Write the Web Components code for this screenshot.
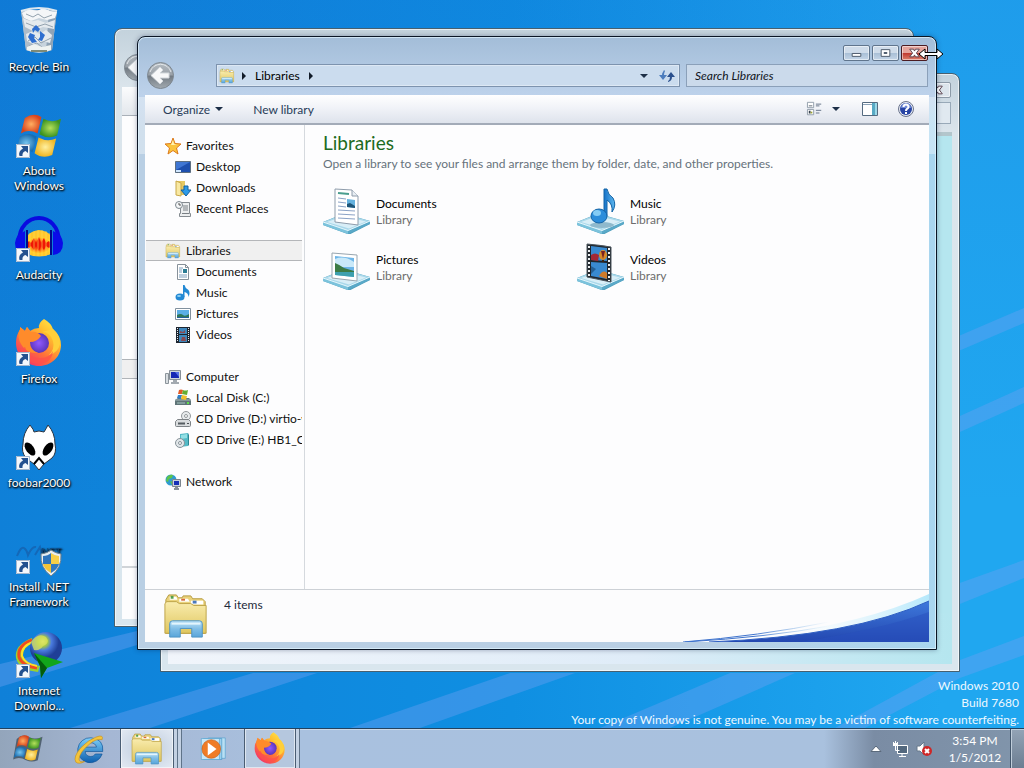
<!DOCTYPE html>
<html lang="en">
<head>
<meta charset="utf-8">
<title>Desktop</title>
<style>
html, body {
    height: 100%;
    margin: 0;
}
body {
    overflow: hidden;
    background: #1286dc;
    color: #000;
    font: 12px/15px Lato, "Open Sans", sans-serif;
}
</style>
</head>
<body>
<desktop-screen>
    <desktop-icon slot="icons" icon="bin">Recycle Bin</desktop-icon>
    <desktop-icon slot="icons" icon="flag" shortcut>About Windows</desktop-icon>
    <desktop-icon slot="icons" icon="audacity" shortcut>Audacity</desktop-icon>
    <desktop-icon slot="icons" icon="firefox" shortcut>Firefox</desktop-icon>
    <desktop-icon slot="icons" icon="foobar" shortcut>foobar2000</desktop-icon>
    <desktop-icon slot="icons" icon="dotnet" shortcut>Install .NET Framework</desktop-icon>
    <desktop-icon slot="icons" icon="idm" shortcut>Internet Downlo...</desktop-icon>

    <aero-window class="left" inactive>
        <blank-pane></blank-pane>
    </aero-window>
    <aero-window class="right" inactive>
        <blank-pane class="teal"></blank-pane>
    </aero-window>
    <aero-window class="main">
        <address-bar slot="address">Libraries</address-bar>
        <search-box slot="search" label="Search Libraries"></search-box>
        <command-bar></command-bar>
        <explorer-body>
            <nav-group slot="nav">
                <nav-item icon="star">Favorites</nav-item>
                <nav-item icon="monitor" child>Desktop</nav-item>
                <nav-item icon="downloads" child>Downloads</nav-item>
                <nav-item icon="recent" child>Recent Places</nav-item>
            </nav-group>
            <nav-group slot="nav">
                <nav-item icon="libraries" selected>Libraries</nav-item>
                <nav-item icon="document" child>Documents</nav-item>
                <nav-item icon="note" child>Music</nav-item>
                <nav-item icon="picture" child>Pictures</nav-item>
                <nav-item icon="film" child>Videos</nav-item>
            </nav-group>
            <nav-group slot="nav">
                <nav-item icon="computer">Computer</nav-item>
                <nav-item icon="disk" child>Local Disk (C:)</nav-item>
                <nav-item icon="cd" child>CD Drive (D:) virtio-win</nav-item>
                <nav-item icon="cdbox" child>CD Drive (E:) HB1_CCPA</nav-item>
            </nav-group>
            <nav-group slot="nav">
                <nav-item icon="network">Network</nav-item>
            </nav-group>
            <library-item icon="lib-documents">Documents</library-item>
            <library-item icon="lib-music">Music</library-item>
            <library-item icon="lib-pictures">Pictures</library-item>
            <library-item icon="lib-videos">Videos</library-item>
        </explorer-body>
        <details-pane>4 items</details-pane>
    </aero-window>

    <task-bar slot="taskbar">
        <task-button icon="start" size="34" label="Start"></task-button>
        <task-button icon="ie" size="30" label="Internet Explorer"></task-button>
        <task-button icon="folder" size="34" label="Windows Explorer" state="active" stack="2"></task-button>
        <task-button icon="player" size="28" label="Media Player"></task-button>
        <task-button icon="firefox" size="32" label="Firefox" state="open" stack="1"></task-button>
    </task-bar>
</desktop-screen>

<script>
// Base del zocalo de las bibliotecas
const STAND = `
<path d="M1 35 22 26.500 48 34v3L28.500 47h-3L1 38z" fill="#4f9fbd"/>
<path d="M1 35 22 27l26 7-21 10z" fill="#a9d8ea"/>
<path d="M5 35 22 29l22 5.500-17 7z" fill="#d8eef7"/>
<path d="M1 35v3l25 9v-3.500z" fill="#7cc3dc"/><path d="M26 43.500V47l22-10v-3z" fill="#5aa9c8"/>
<path d="M1 35l25 8.500L48 34" fill="none" stroke="#e9f8fd"/>`

const FOLDER = `
<defs><linearGradient id="fo" x2="0" y2="1"><stop stop-color="#f9ecae"/><stop offset="1" stop-color="#dfc65e"/></linearGradient>
<linearGradient id="fb" x2="0" y2="1"><stop stop-color="#bfe4f7"/><stop offset=".5" stop-color="#7fbde6"/><stop offset="1" stop-color="#59a5da"/></linearGradient></defs>
<path d="M4 7 7 2h8l2 3h4l1-2h8l2 3h10l3 3v33H4z" fill="#ead27a" stroke="#b49a3f"/>
<path d="M8 4h7l1 3H8z" fill="#fff"/><path d="M9 3h3v3H9z" fill="#54a14c"/>
<path d="M18 6h9l2 3H18z" fill="#fff"/><path d="M20 6h4v2h-4z" fill="#d66a3a"/>
<path d="M30 8h13v4H30z" fill="#fff"/><path d="M32 8h4v3h-4z" fill="#4a78bd"/>
<path d="M3 11 5 9h10l3 2h12l3 2h13v29H3z" fill="url(#fo)" stroke="#bda348"/>
<path d="M8 46V32q0-3 3-3h28q3 0 3 3v14H31v-9H19v9z" fill="url(#fb)" stroke="#4d93c4"/>
<path d="M10 32h30" stroke="#e3f5fd" stroke-width="2"/>`

const FLAG = `
<defs><radialGradient id="fr"><stop stop-color="#ffae62"/><stop offset="1" stop-color="#d8431c"/></radialGradient>
<radialGradient id="fg"><stop stop-color="#b4e05a"/><stop offset="1" stop-color="#3d9422"/></radialGradient>
<radialGradient id="fl"><stop stop-color="#77c4ee"/><stop offset="1" stop-color="#1a6db0"/></radialGradient>
<radialGradient id="fy"><stop stop-color="#fff0a0"/><stop offset="1" stop-color="#f0b624"/></radialGradient></defs>
<path d="M9 5q9-6 17-1l-4 17q-9-5-17 0z" fill="url(#fr)"/>
<path d="M28 6q9 5 18 0l-4 17q-9 4-18-1z" fill="url(#fg)"/>
<path d="M4 24q9-5 17 0l-4 16q-8-5-17 0z" fill="url(#fl)"/>
<path d="M23 25q9 5 18 1l-4 17q-10 4-18-2z" fill="url(#fy)"/>`

const ICONS = {
    bin: ['0 0 48 48', `
<path d="M6 2 11 42q13 5 26 0L42 2z" fill="#c7d3dd"/>
<path d="M6 2 11 42q5 2 9 2L16 2z" fill="#aebcc9"/><path d="M34 2l-3 42 6-2L42 2z" fill="#8fa3b6"/>
<path d="M7 5 14 1l8 2 6-3 7 3 7 1-2 6-8 2-8-2-8 3-7-3z" fill="#f4f6f8"/>
<path d="M8 10q8 5 15 2l8 3 9-3-1 9-11-2-10 4-8-4zM11 26l7-3 7 3 6-4 6 5-2 8-8-2-7 4-8-4z" fill="#e5eaee"/>
<path d="M11 6l7 3 5-3 6 4 8-3M11 15l10 4 9-3 8 3M13 33l7-4 6 6 10-5M14 38l8-3 6 5 8-4" stroke="#93a2ae" fill="none"/>
<path d="M12 39l7-3 8 3 9-2v5q-12 5-24 0z" fill="#f0f3f1"/><path d="M16 43h16" stroke="#7d8a78" stroke-width="2"/>
<path d="M17 21l4-4 4 4-2 3-3-2-2 3zM25 23l5 4-3 6-4-1 2-3zM15 25l5 2-1 3 3 4-5 1-4-6z" fill="#2f6fd0"/>
<path d="M6 3q18-6 36 0" stroke="#dce7ef" stroke-width="2" fill="none"/>`],
    flag: ['-1 -1 49 49', FLAG],
    start: ['-3 -4 58 58', `<path d="M5 8Q15-2 27 5q9 5 22-1L41 44q-10 5-20 0-12-7-22-1z" fill="#22303c" opacity=".6"/>` + FLAG],
    audacity: ['0 0 48 48', `
<defs><radialGradient id="aw"><stop stop-color="#f00"/><stop offset=".45" stop-color="#ff4b10"/><stop offset="1" stop-color="#ffd02a"/></radialGradient></defs>
<path d="M4 26C4-6 44-6 44 26" fill="none" stroke="#0a0ae0" stroke-width="4"/>
<path d="M12 20q4-5 12-6 9 1 12 6v18q-12 5-24 0z" fill="#ffc72c"/>
<path d="M12 24q12-6 24 0v11q-12 5-24 0z" fill="url(#aw)"/>
<path d="M11 28l3-3 2 2 3-5 2 5 3-6 2 6 3-5 2 5 3-2 3 4-3 3-3-2-2 4-3-4-2 5-3-5-2 4-3-4-2 2z" fill="#f01505"/>
<path d="M15 17v21M19 15v25M23 14v26M27 14v26M31 15v25M35 17v21" stroke="#ffdf55" opacity=".6"/>
<path d="M10 15v24Q0 38 0 27 1 18 10 15zM38 15v24q10-1 10-12-1-9-10-12z" fill="#0b0be8"/>
<path d="M12 14v25M36 14v25" stroke="#000a8c" stroke-width="2"/>`],
    firefox: ['0 2 48 48', `
<defs><linearGradient id="fx" x1="1" x2=".2" y2="1"><stop stop-color="#fff44f"/><stop offset=".35" stop-color="#ffbd2e"/><stop offset=".65" stop-color="#ff7139"/><stop offset="1" stop-color="#f02c6f"/></linearGradient>
<radialGradient id="fp"><stop stop-color="#9059ff"/><stop offset="1" stop-color="#5a35b9"/></radialGradient></defs>
<path d="M29 1q7 4 9 10 8 7 8 16c0 12-10 21-22 21S1 38 1 25q0-8 4-13V9l5 4 2-4 3 4q4-3 9-3-1-5 5-9z" fill="url(#fx)"/>
<circle cx="24" cy="25" r="10" fill="url(#fp)"/>
<path d="M4 13q2-3 1-4l5 4 2-4 4 5q6-1 10 4-4 6-11 6 0 8 8 11-12 1-17-9-4-7-2-13z" fill="#ff8b2b"/>
<path d="M27 14q8 0 11 9 2 8-4 14 9-2 11-11 0-9-7-15z" fill="#ffcf3a"/>
<path d="M10 29q4 12 16 11 8 0 12-7-1 12-14 13Q9 45 5 31z" fill="#ff4f4c" opacity=".7"/>`],
    foobar: ['0 2 48 48', `
<path d="M15 3q4 5 4 7 5-2 10 0 2-3 4-7 7 8 7 19 2 9-3 14l-8 6-5 6-5-6-8-6q-5-6-3-14 0-11 7-19z" fill="#fff" stroke="#2b3440"/>
<ellipse cx="15" cy="27" rx="4" ry="7.500" transform="rotate(-35 15 27)"/><ellipse cx="33" cy="27" rx="4" ry="7.500" transform="rotate(35 33 27)"/>
<path d="M19 42l5-6 5 6" fill="none" stroke="#000" stroke-width="2"/>`],
    dotnet: ['0 0 48 48', `
<path d="M2 28q4-10 7-8 3 2 4 7 4-9 8-8M20 27l5-8 2 8" stroke="#1468b8" stroke-width="2" fill="none"/>
<text x="26" y="28" font-family="Open Sans" font-size="11" fill="#124c86">NET</text>
<path d="M26 26q7-1 10-4 4 3 10 4 1 14-10 22-11-8-10-22z" fill="#e7edf2" stroke="#71838f"/>
<path d="M28 28q5 0 8-3v11h-8z" fill="#2d74bd"/><path d="M36 25q4 3 8 3v8h-8z" fill="#f7cf48"/>
<path d="M28 36h8v9q-7-4-8-9z" fill="#f3c437"/><path d="M36 36h8q-1 5-8 9z" fill="#3179c2"/>`],
    idm: ['0 0 48 48', `
<defs><radialGradient id="ig" cx=".4" cy=".3"><stop stop-color="#fafc8a"/><stop offset=".3" stop-color="#a3c745"/><stop offset=".55" stop-color="#4a7ce0"/><stop offset="1" stop-color="#1f3f97"/></radialGradient></defs>
<path d="M17 6Q-1 13 1 26q3 12 22 14l2-6Q9 33 8 23q0-8 10-12z" fill="#9bd030"/>
<path d="M17 8Q2 14 4 25q3 9 18 11" fill="none" stroke="#f04a20" stroke-width="3"/><path d="M18 10Q6 14 7 24q3 8 15 10" fill="none" stroke="#ffdf28" stroke-width="2"/>
<circle cx="31" cy="16" r="16" fill="url(#ig)"/>
<path d="M16 10q7-10 15-5 5 6-3 9-3 5-9 4z" fill="#d6e05a" opacity=".8"/>
<path d="M19 21q13 4 29 9L32 36 26 46 25 34z" fill="#12a51b"/><path d="M19 21l13 15-6 10-1-12z" fill="#045c0b"/>`],
    shortcut: ['0 0 14 14', `
<path d="M0 0h14v14H0z" fill="#f3f7fc"/><path d="M.5.5h13v13H.5z" fill="none" stroke="#a5b7cd"/>
<path d="M5 2h7v7L9.500 7Q6 8 6.500 12H3.500Q2 7 7 4.500z" fill="#24518f"/>`],
    folder: ['0 0 50 48', FOLDER],
    libraries: ['0 0 50 48', FOLDER],
    star: ['0 0 16 16', `<path d="M8 0l2 5.500 6 .5-4.500 4 1.500 6-5-3.500L3 16l1.500-6L0 6l6-.5z" fill="#fbc43c" stroke="#dc7a1b"/><path d="M8 2l1 4 3 1H6z" fill="#fff2b0"/>`],
    monitor: ['0 0 16 16', `<path d="M.5 2.500h15v11H.5z" fill="#1d4fae" stroke="#5c6e80"/><path d="M1 3h14L1 11z" fill="#3f76d3"/><path d="M1 12h5" stroke="#cfe6ff" stroke-width="2"/>`],
    downloads: ['0 0 16 16', `<path d="M1 1h9v14H1z" fill="#e5c964"/><path d="M1 1l5 2v13l-5-1z" fill="#f8e8a2" stroke="#c8a849"/><path d="M9 6h4v4h3l-5 6-5-6h3z" fill="#2d9be8" stroke="#12609f"/>`],
    recent: ['0 0 16 16', `<path d="M5.500 1.500h9v11h1v3H4.500v-3h1z" fill="#eceeef" stroke="#858b90"/><path d="M8 5h5M8 7h5M8 9h5M7 12.500h7" stroke="#7a8085"/><circle cx="4" cy="4" r="3.500" fill="#f5f7f8" stroke="#7d878f"/><path d="M4 2v2h2" stroke="#555" fill="none"/>`],
    document: ['0 0 16 16', `<path d="M2.500.5h8l3 3v12h-11z" fill="#fff" stroke="#87919a"/><path d="M10.500.5v3h3" fill="none" stroke="#87919a"/><path d="M4 4h4M4 6h3M4 8h3M4 11h8M4 13h8" stroke="#7f9fbd"/><path d="M8 5h4v4H8z" fill="#2c7c94"/>`],
    note: ['0 0 16 16', `<ellipse cx="5" cy="12" rx="4.500" ry="3.500" fill="#2389d4"/><path d="M8 0h1.500q.5 3 4 5 2 3 0 7 0-4-4-5v5H8z" fill="#2389d4"/><ellipse cx="4" cy="11" rx="2" ry="1" fill="#8ed0f5"/>`],
    picture: ['0 0 16 16', `<path d="M.5 2.500h15v11H.5z" fill="#fff" stroke="#82919e"/><path d="M2 4h12v8H2z" fill="#5aaee6"/><path d="M2 9q4-2 6 0t6-1v4H2z" fill="#2f7659"/><path d="M2 11h12v1H2z" fill="#215f9c"/>`],
    film: ['0 0 16 16', `<path d="M1 0h14v16H1z" fill="#1d2530"/><path d="M4 1h8v6H4zM4 8h8v7H4z" fill="#3f87bd"/><path d="M5 4l3 1 2-2v3H5zM7 10h3l1 4H6z" fill="#8a4a52"/><path d="M2.500 1v14M13.500 1v14" stroke="#e9eef2" stroke-dasharray="1 1"/>`],
    computer: ['0 0 16 16', `<path d="M.5 4.500h3v10h-3z" fill="#d8dde1" stroke="#8b949b"/><path d="M4.500 1.500h11v9h-11z" fill="#cdd6dd" stroke="#868f98"/><path d="M6 3h8v6H6z" fill="#1527b4"/><path d="M10 3h4v5z" fill="#5470e6"/><path d="M8 11h4v2h2v2H6v-2h2z" fill="#a3aab1"/>`],
    disk: ['0 0 16 16', `<path d="M0 10l3-2h11l2 2v5H0z" fill="#5f7478"/><path d="M0 10h16" stroke="#aab9bb"/><path d="M2 13h8" stroke="#a8c6c0"/><path d="M12 12h2v2h-2z" fill="#5ee04a"/><path d="M4 0q2-1 4 0L7 4 3 4z" fill="#e35a25"/><path d="M8 0q2 1 5 0l-1 5-5-1z" fill="#64ad31"/><path d="M3 5l4 0-1 4-4-1z" fill="#327fc4"/><path d="M7 5l5 1-1 4-5-1z" fill="#f2c02b"/>`],
    cd: ['0 0 16 16', `<circle cx="11" cy="5" r="4.500" fill="#e8ebed" stroke="#94999d"/><circle cx="11" cy="5" r="1.500" fill="#fff" stroke="#94999d"/><path d="M.5 10.500l2-2h11l2 2v4q0 1-1 1h-13q-1 0-1-1z" fill="#d9dcde" stroke="#7e8387"/><path d="M3 12.500h7" stroke="#555c61" stroke-width="2"/><path d="M12 12h2v1h-2z" fill="#4a4f53"/>`],
    cdbox: ['0 0 16 16', `<path d="M5 2l8-1v13l-8 1z" fill="#53b9c5"/><path d="M6 3l6-1v4L6 7z" fill="#92dfe4"/><path d="M13 1l1 2v10l-1 1z" fill="#2c8792"/><circle cx="5" cy="11" r="4.500" fill="#e1e6e9" stroke="#879299"/><circle cx="5" cy="11" r="1.500" fill="#fff" stroke="#879299"/>`],
    network: ['0 0 16 16', `<circle cx="6" cy="6" r="5.500" fill="#2e9bd1"/><path d="M2 3q3-3 6-2l-1 3-3 1-1 3-2-1zM5 7l3 1-1 3z" fill="#5fc44a"/><path d="M7.500 5.500h8v7h-8z" fill="#c9d2da" stroke="#7b858e"/><path d="M9 7h5v4H9z" fill="#1630b8"/><path d="M10 13h3v1h1v2H9v-2h1z" fill="#88919a"/>`],
    'lib-documents': ['1 0 48 48', STAND + `
<path d="M13 2l17 1 6 6v29L13 35z" fill="#fff" stroke="#8e9cab"/><path d="M30 3v6h6" fill="#e8eef4" stroke="#8e9cab"/>
<path d="M16 6l11 1" stroke="#4b9e8f" stroke-width="2"/><path d="M16 11l8 1M16 15l8 1M16 19l8 1M16 23l17 1M16 27l17 1M16 31l17 1" stroke="#8aa2c6"/>
<path d="M25 12l8 1v8l-8-1z" fill="#64b2df"/><path d="M25 17l3-1 5 3v2l-8-1z" fill="#1d5578"/>`],
    'lib-music': ['1 0 48 48', STAND + `
<defs><linearGradient id="mn"><stop stop-color="#1672c8"/><stop offset="1" stop-color="#5db7ee"/></linearGradient></defs>
<ellipse cx="26" cy="38" rx="12" ry="3" fill="#8fb9cc"/>
<path d="M28 2h3q1 6 6 9 4 7-1 14 1-8-5-12v16h-3z" fill="url(#mn)" stroke="#1464a6"/>
<ellipse cx="23" cy="29" rx="8" ry="7" fill="#2b8ddb" stroke="#1464a6"/><ellipse cx="21" cy="26" rx="4" ry="3" fill="#84ccf5"/>`],
    'lib-pictures': ['1 0 48 48', STAND + `
<path d="M10 10l25 2v26l-25-3z" fill="#fff" stroke="#98a5af"/>
<path d="M13 13l19 2v19l-19-2z" fill="#6db5e8"/><path d="M13 16q9-4 19 3v5H13z" fill="#c9e9f9"/>
<path d="M13 20q5 2 9 5l10 3v2l-19 0z" fill="#3c7b45"/><path d="M13 29l19 0v5l-19-2z" fill="#3da0ae"/>`],
    'lib-videos': ['1 0 48 48', STAND + `
<path d="M11 1q12 1 24 3v35l-24-5z" fill="#20262c" stroke="#4a545c"/>
<path d="M15 3l16 2v13l-16-1zM15 19l16 1v16l-16-3z" fill="#398ad0"/>
<path d="M15 12q4-3 8 0l-1 6-7-1z" fill="#a42833"/><ellipse cx="27" cy="12" rx="4" ry="5" fill="#d78a27"/><path d="M25 8l2 8 2-8z" fill="#7a2222"/><path d="M26 17h2v2h-2z" fill="#3d2613"/>
<path d="M23 33q4-7 8-3v6z" fill="#cf7b2b"/><path d="M15 23l5 3-5 5z" fill="#235f94"/>
<path d="M13 3v31M33 5v33" stroke="#eef1f3" stroke-width="2" stroke-dasharray="2 2"/>`],
    ie: ['0 0 48 48', `
<defs><linearGradient id="ie" x2="0" y2="1"><stop stop-color="#7fd0fa"/><stop offset="1" stop-color="#0c5eae"/></linearGradient></defs>
<path d="M27 6a20 20 0 1 0 18 26H34q-3 5-8 4-8-1-8-8h28Q48 8 27 6zm-9 15q1-7 9-7 7 0 9 7z" fill="url(#ie)" stroke="#0a4f93"/>
<path d="M45 9Q48 0 35 5 22 10 11 22-2 37 3 45q5 4 14-1Q8 46 8 40q1-11 17-24 10-9 20-7z" fill="#f4c43c" stroke="#c58f1b"/>`],
    player: ['0 0 48 48', `
<path d="M16 5h29v35H16z" fill="#b9e0f4" stroke="#4a9ac9"/><path d="M8 6h31v36H8z" fill="#9bd0ee" stroke="#3d8dbf"/>
<path d="M4 6h31v36H4z" fill="#c6e7f8" stroke="#4e9fcd"/><circle cx="21" cy="24" r="16" fill="#ef7c26" stroke="#c55b14"/>
<path d="M15 13l15 11-15 11z" fill="#fff"/>`],
    back: ['0 0 27 27', `
<defs><linearGradient id="bk" x2="0" y2="1"><stop stop-color="#b5bcc2"/><stop offset=".48" stop-color="#9aa1a8"/><stop offset=".52" stop-color="#727a82"/><stop offset="1" stop-color="#a3abb1"/></linearGradient></defs>
<circle cx="13.500" cy="13.500" r="13" fill="url(#bk)" stroke="#7d8790"/><path d="M3 10a11 11 0 0 1 21 0" fill="none" stroke="#e3e7ea"/>
<path d="M13 5l3 3-3 3h9v5h-9l3 3-3 3-9-8.500z" fill="#f7f8f9" stroke="#d3d8dc"/>`],
    minimize: ['0 0 26 14', `<path d="M8.500 7.500h9v3h-9z" fill="#fff" stroke="#4c596a"/>`],
    maximize: ['0 0 26 14', `<path d="M8.500 3.500h9v7h-9z" fill="#fff" stroke="#4c596a"/><path d="M11.500 6.500h3v1h-3z" fill="#9fb3ca" stroke="#4c596a"/>`],
    close: ['0 0 26 14', `<path d="M8 3h4l1 2 1-2h4l-3 4 3 4h-4l-1-2-1 2H8l3-4z" fill="#fff" stroke="#5c4550"/>`],
    right: ['0 0 8 8', `<path d="M2 0l4 4-4 4z" fill="#111b28"/>`],
    down: ['0 0 8 8', `<path d="M0 2h8L4 6z" fill="#1d2f47"/>`],
    refresh: ['0 0 16 16', `<path d="M5 2L4 4q-1 1-1 3H0l4 5 4-5H5q0-2 1-4z" fill="#4d7dbd"/><path d="M12 4l4 5h-3q0 4-4 5l0-1q2-1 2-4H8z" fill="#294f8d"/>`],
    view: ['0 0 18 16', `<path d="M.5.500h7v6h-7zM.5 8.500h7v6h-7z" fill="#fff" stroke="#8b97a5"/><path d="M2 4h4v1H2zM2 10h2v3H2z" fill="#36424f"/><path d="M4 11h2v2H4z" fill="#9ba232"/><path d="M10 2.500h6M10 4.500h4M10 9.500h6M10 12.500h4" stroke="#5a6a7f"/>`],
    preview: ['0 0 16 14', `<path d="M.5.500h15v13H.5z" fill="#fff" stroke="#546a80"/><path d="M1 2.500h14" stroke="#8ba2b8"/><path d="M10 1h5v12h-5z" fill="#58a9c4"/><path d="M13 1h2v12h-2z" fill="#9bd8e8"/>`],
    help: ['0 0 16 16', `<circle cx="8" cy="8" r="7.500" fill="#e7ebf4" stroke="#69738c"/><circle cx="8" cy="8" r="6" fill="#2744a4"/><path d="M3 7a5 5 0 0 1 10 0z" fill="#6d87d4"/><path d="M5.500 6q0-2.500 2.500-2.500T10.500 6q0 1-1.500 2-1 .5-1 2" fill="none" stroke="#fff" stroke-width="2"/><path d="M7 11h2v2H7z" fill="#fff"/>`],
    up: ['0 0 10 6', `<path d="M0 5.500L5 0l5 5.500z" fill="#fff" stroke="#5b6a7c"/>`],
    lan: ['0 0 16 16', `<path d="M5.500 4.500h10v8h-10z" fill="#53687e" stroke="#fff"/><path d="M10 13v2M7 15.500h7" stroke="#fff"/><path d="M1.500 1v3h4V1M3.500 0v9.500h4" stroke="#fff" fill="none"/><path d="M1 2h5v3H1z" fill="#fff"/>`],
    muted: ['0 0 16 16', `<path d="M1 5h3l4-4v13l-4-4H1z" fill="#fff" stroke="#66788b"/><circle cx="11" cy="10" r="5" fill="#cf2727"/><path d="M9 8l4 4M13 8l-4 4" stroke="#fff" stroke-width="2"/>`],
    resize: ['0 0 24 12', `<path d="M0 6l6-5v3.500h12V1l6 5-6 5V7.500H6V11z" fill="#fff" stroke="#000"/>`],
}

class WinIcon extends HTMLElement {
    constructor(){
        super()
        this.attachShadow({mode: 'open'})
        const [box, shapes] = ICONS[this.getAttribute('name')]
        this.shadowRoot.innerHTML = `
        <style>
        :host{ display: block; flex: none; width: 16px; height: 16px; }
        svg{ display: block; width: 100%; height: 100%; overflow: visible; }
        </style>
        <svg viewBox="${box}" aria-hidden="true">${shapes}</svg>`
    }
}

class DesktopIcon extends HTMLElement {
    constructor(){
        super()
        this.attachShadow({mode: 'open'})
        const arrow = this.hasAttribute('shortcut') ? '<win-icon class="arrow" name="shortcut"></win-icon>' : ''
        this.shadowRoot.innerHTML = `
        <style>
        :host{ display: block; height: 104px; }
        a{
            display: flex;
            flex-direction: column;
            align-items: center;
            gap: 3px;
            color: #fff;
            text-align: center;
            text-decoration: none;
            text-shadow: 1px 1px 2px #000, 0 1px 2px #000;
        }
        .art{ position: relative; }
        .art > win-icon:first-child{ width: 48px; height: 48px; }
        .arrow{ position: absolute; left: 1px; bottom: 2px; width: 14px; height: 14px; }
        </style>
        <a href="#">
            <div class="art"><win-icon name="${this.getAttribute('icon')}"></win-icon>${arrow}</div>
            <span><slot></slot></span>
        </a>`
    }
}

class DesktopScreen extends HTMLElement {
    constructor(){
        super()
        this.attachShadow({mode: 'open'})
        this.shadowRoot.innerHTML = `
        <style>
        :host{ display: grid; grid-template-rows: 1fr 40px; height: 100vh; }
        main{
            position: relative;
            overflow: hidden;
            background:
                linear-gradient(180deg, rgba(20,80,200,.12), transparent 70%),
                linear-gradient(90deg, #0f80d8, #0f8fe2 50%, #20a7f0 92%);
        }
        .rays{ position: absolute; inset: 0; width: 100%; height: 100%; }
        .icons{ position: relative; display: flex; flex-direction: column; width: 78px; padding-top: 8px; }
        ::slotted(aero-window){ position: absolute; }
        ::slotted(.left){ inset: 28px 110px 101px 114px; }
        ::slotted(.right){ inset: 73px 64px 56px 160px; }
        ::slotted(.main){ inset: 36px 87px 78px 137px; }
        .build{
            position: absolute;
            right: 5px;
            bottom: 0;
            color: #eef8ff;
            text-align: right;
            line-height: 17px;
        }
        .build p{ margin: 0; }
        .cursor{ position: absolute; top: 48px; right: 81px; width: 24px; height: 12px; }
        </style>
        <main>
            <svg class="rays" viewBox="0 0 1024 728" preserveAspectRatio="none" aria-hidden="true" fill="#6f9ff2" fill-opacity=".4">
                <path d="M0 664 137 631V645L0 687z"/>
                <path d="M70 728 253 673H317L150 728z"/>
                <path d="M350 728 510 673H575L420 728z"/>
                <path d="M600 728 730 673H795L670 728z"/>
                <path d="M835 728 960 660 1024 636V655L960 678 865 728z"/>
                <path d="M940 590 1024 560V578L940 612z"/>
                <path d="M940 425 1024 387V403L940 441z"/>
                <path d="M940 344 1024 308V323L940 359z"/>
            </svg>
            <div class="icons"><slot name="icons"></slot></div>
            <div class="build">
                <p>Windows 2010</p>
                <p>Build 7680</p>
                <p>Your copy of Windows is not genuine. You may be a victim of software counterfeiting.</p>
            </div>
            <slot></slot>
            <win-icon class="cursor" name="resize"></win-icon>
        </main>
        <slot name="taskbar"></slot>`
    }
}

class AeroWindow extends HTMLElement {
    constructor(){
        super()
        this.attachShadow({mode: 'open'})
        this.shadowRoot.innerHTML = `
        <style>
        :host{
            display: flex;
            flex-direction: column;
            box-sizing: border-box;
            padding: 0 7px 7px;
            border: 1px solid #0a1524;
            border-radius: 8px 8px 0 0;
            background:
                linear-gradient(rgba(255,255,255,.35), rgba(255,255,255,.35)) 0 60px / 100% 57px no-repeat,
                linear-gradient(#a3bdd8, #bdd2eb 58px, transparent 90px),
                linear-gradient(90deg, #b9cfe4 70%, #a9d6ef);
            box-shadow: inset 0 0 0 1px rgba(225,245,255,.7), 0 0 5px rgba(0,20,60,.35);
        }
        :host([inactive]){
            border-color: #48606f;
            background: linear-gradient(#c3d2dc, #dbe5ec 60px, #d9e6ee);
            box-shadow: inset 0 0 0 1px rgba(255,255,255,.6);
        }
        .caption{ display: flex; justify-content: flex-end; gap: 2px; padding: 8px 1px 1px; }
        .caption button{
            width: 27px;
            height: 16px;
            padding: 0;
            border: 1px solid #60758d;
            border-radius: 2px;
            background: linear-gradient(#cfdcea 48%, #a9bfd6 52%, #c5d6e8);
            box-shadow: inset 0 0 0 1px rgba(255,255,255,.5);
        }
        .caption win-icon{ width: 25px; height: 14px; }
        .caption .close{ border-color: #4b1c22; background: linear-gradient(#e5a49c 48%, #c13a30 52%, #dd7f6c); }
        :host([inactive]) .caption button{ border-color: #8c9aa7; background: #dce5ec; }
        .bar{ display: flex; align-items: center; gap: 6px; padding: 0 1px 6px 2px; }
        .back{ margin-right: 36px; padding: 0; border: 0; background: none; }
        .back win-icon{ width: 27px; height: 27px; }
        .address{ flex: 464; }
        .search{ flex: 242; }
        :host([inactive]) .address, :host([inactive]) .search{ height: 20px; border: 1px solid #98a9b8; background: #e0e9f0; }
        .client{ flex: 1; display: flex; flex-direction: column; min-height: 0; background: #fdfdfe; }
        </style>
        <div class="caption">
            <button aria-label="Minimize"><win-icon name="minimize"></win-icon></button>
            <button aria-label="Maximize"><win-icon name="maximize"></win-icon></button>
            <button class="close" aria-label="Close"><win-icon name="close"></win-icon></button>
        </div>
        <div class="bar">
            <button class="back" aria-label="Back"><win-icon name="back"></win-icon></button>
            <div class="address"><slot name="address"></slot></div>
            <div class="search"><slot name="search"></slot></div>
        </div>
        <div class="client"><slot></slot></div>`
    }
}

class BlankPane extends HTMLElement {
    constructor(){
        super()
        this.attachShadow({mode: 'open'})
        this.shadowRoot.innerHTML = `
        <style>
        :host{ flex: 1; display: flex; flex-direction: column; }
        .tools{ height: 28px; border-bottom: 1px solid #a9b0b8; background: linear-gradient(#fbfcfd, #e3e7ec); }
        .space{ flex: 243; }
        .row{ height: 18px; border: 1px solid #b0b4b8; border-width: 1px 0; background: #f0f0f0; }
        .rest{ flex: 187; border-bottom: 2px solid #d0d4d8; }
        .foot{ height: 51px; }
        :host(.teal) .tools{ height: 0; border-bottom: 4px solid #b3c6cc; }
        :host(.teal) .row{ display: none; }
        :host(.teal) .space, :host(.teal) .rest{ background: #b5e6ef; border: 0; }
        :host(.teal) .foot{ background: linear-gradient(90deg, #f1f5fb, #dfecf8 60%, #b5e6ef); }
        </style>
        <div class="tools"></div>
        <div class="space"></div>
        <div class="row"></div>
        <div class="rest"></div>
        <div class="foot"></div>`
    }
}

class AddressBar extends HTMLElement {
    constructor(){
        super()
        this.attachShadow({mode: 'open'})
        this.shadowRoot.innerHTML = `
        <style>
        :host{
            display: flex;
            align-items: center;
            box-sizing: border-box;
            height: 23px;
            padding: 0 4px 0 2px;
            border: 1px solid #7d93ae;
            background: #cbdcee;
            box-shadow: inset 0 0 0 1px rgba(255,255,255,.35);
        }
        .arrow{ width: 8px; height: 8px; }
        .path{ margin: 0 7px; color: inherit; text-decoration: none; }
        .first{ margin-left: 5px; }
        button{ padding: 0; border: 0; background: none; }
        .drop{ margin-left: auto; margin-right: 11px; }
        </style>
        <win-icon name="libraries"></win-icon>
        <win-icon class="arrow first" name="right"></win-icon>
        <a class="path" href="#"><slot></slot></a>
        <win-icon class="arrow" name="right"></win-icon>
        <button class="drop" aria-label="Previous locations"><win-icon class="arrow" name="down"></win-icon></button>
        <button aria-label="Refresh"><win-icon name="refresh"></win-icon></button>`
    }
}

class SearchBox extends HTMLElement {
    constructor(){
        super()
        this.attachShadow({mode: 'open'})
        const label = this.getAttribute('label')
        this.shadowRoot.innerHTML = `
        <style>
        :host{ display: block; }
        input{
            display: block;
            box-sizing: border-box;
            width: 100%;
            height: 23px;
            padding: 0 8px;
            border: 1px solid #8ba0b9;
            background: #cbdaeb;
            color: #10151c;
            font: inherit;
        }
        input::placeholder{ color: #10151c; font-style: italic; opacity: 1; }
        </style>
        <input type="text" placeholder="${label}" aria-label="${label}">`
    }
}

class CommandBar extends HTMLElement {
    constructor(){
        super()
        this.attachShadow({mode: 'open'})
        this.shadowRoot.innerHTML = `
        <style>
        :host{
            display: flex;
            align-items: center;
            box-sizing: border-box;
            height: 30px;
            padding: 0 15px 0 18px;
            border-bottom: 2px solid #a3abb8;
            background: linear-gradient(#fff, #f1f3f8 45%, #dee3ec);
        }
        button{
            display: flex;
            align-items: center;
            gap: 5px;
            margin: 0;
            padding: 0;
            border: 0;
            background: none;
            color: #283c58;
            font: inherit;
        }
        .small{ width: 8px; height: 8px; }
        .new{ margin-left: 30px; margin-right: auto; }
        .view{ gap: 9px; }
        .preview{ margin: 0 20px 0 22px; }
        </style>
        <button>Organize <win-icon class="small" name="down"></win-icon></button>
        <button class="new">New library</button>
        <button class="view" aria-label="Change your view"><win-icon name="view"></win-icon><win-icon class="small" name="down"></win-icon></button>
        <button class="preview" aria-label="Show the preview pane"><win-icon name="preview"></win-icon></button>
        <button aria-label="Get help"><win-icon name="help"></win-icon></button>`
    }
}

class ExplorerBody extends HTMLElement {
    constructor(){
        super()
        this.attachShadow({mode: 'open'})
        this.shadowRoot.innerHTML = `
        <style>
        :host{ flex: 1; display: grid; grid-template-columns: 160px 1fr; min-height: 0; }
        nav{
            display: flex;
            flex-direction: column;
            gap: 21px;
            min-width: 0;
            overflow: hidden;
            padding: 10px 2px 0 1px;
            border-right: 1px solid #d5d9de;
        }
        section{ padding: 8px 18px; }
        h1{ margin: 0; color: #1e6b22; font-size: 19px; font-weight: 400; line-height: 20px; }
        p{ margin: 3px 0 16px; color: #66727c; line-height: 15px; }
        .items{ display: grid; grid-template-columns: repeat(auto-fill, 246px); gap: 8px; }
        </style>
        <nav><slot name="nav"></slot></nav>
        <section>
            <h1>Libraries</h1>
            <p>Open a library to see your files and arrange them by folder, date, and other properties.</p>
            <div class="items"><slot></slot></div>
        </section>`
    }
}

class NavGroup extends HTMLElement {
    constructor(){
        super()
        this.attachShadow({mode: 'open'})
        this.shadowRoot.innerHTML = `
        <style>
        :host{ display: block; }
        </style>
        <slot></slot>`
    }
}

class NavItem extends HTMLElement {
    constructor(){
        super()
        this.attachShadow({mode: 'open'})
        this.shadowRoot.innerHTML = `
        <style>
        :host{ display: block; }
        a{
            display: flex;
            align-items: center;
            gap: 5px;
            box-sizing: border-box;
            height: 21px;
            padding-left: 19px;
            border: 1px solid transparent;
            border-width: 1px 0;
            overflow: hidden;
            color: #101010;
            text-decoration: none;
            white-space: nowrap;
        }
        :host([child]) a{ padding-left: 29px; }
        :host([selected]) a{ border-color: #b4b6b9; background: #f0f0f0; }
        </style>
        <a href="#"><win-icon name="${this.getAttribute('icon')}"></win-icon><span><slot></slot></span></a>`
    }
}

class LibraryItem extends HTMLElement {
    constructor(){
        super()
        this.attachShadow({mode: 'open'})
        this.shadowRoot.innerHTML = `
        <style>
        :host{ display: block; }
        a{ display: flex; align-items: center; gap: 5px; color: #000; line-height: 16px; text-decoration: none; }
        win-icon{ width: 48px; height: 48px; }
        span{ display: block; }
        .kind{ color: #6d6d6d; }
        .text{ padding-top: 2px; }
        </style>
        <a href="#">
            <win-icon name="${this.getAttribute('icon')}"></win-icon>
            <div class="text"><span><slot></slot></span><span class="kind">Library</span></div>
        </a>`
    }
}

class DetailsPane extends HTMLElement {
    constructor(){
        super()
        this.attachShadow({mode: 'open'})
        this.shadowRoot.innerHTML = `
        <style>
        :host{
            position: relative;
            display: flex;
            gap: 14px;
            box-sizing: border-box;
            height: 53px;
            padding: 3px 17px;
            border-top: 1px solid #cdd1d6;
            background: #fcfcfd;
            color: #1e2a3a;
        }
        .folder{ width: 48px; height: 46px; }
        .text{ padding-top: 4px; }
        .wave{ position: absolute; right: 0; bottom: 0; width: 250px; height: 52px; }
        </style>
        <win-icon class="folder" name="folder"></win-icon>
        <span class="text"><slot></slot></span>
        <svg class="wave" viewBox="0 0 250 52" aria-hidden="true">
            <defs>
                <linearGradient id="sea" x2="0" y2="1"><stop stop-color="#3e79dc"/><stop offset="1" stop-color="#2347b0"/></linearGradient>
                <linearGradient id="glow"><stop offset=".3" stop-color="#fff" stop-opacity="0"/><stop offset="1" stop-color="#b5e8fb"/></linearGradient>
                <linearGradient id="fade" gradientUnits="userSpaceOnUse" x2="150"><stop offset=".5" stop-color="#3f73cc"/><stop offset="1" stop-color="#8fc8f0" stop-opacity="0"/></linearGradient>
            </defs>
            <path d="M20 51Q165 43 250 4V14Q160 48 40 52z" fill="url(#glow)"/>
            <path d="M4 52Q80 46 150 32" fill="none" stroke="url(#fade)"/>
            <path d="M6 52Q90 47 150 36" fill="none" stroke="url(#fade)"/>
            <path d="M30 52Q175 46 250 11V52z" fill="url(#sea)"/>
            <path d="M120 52Q200 40 250 22V52z" fill="#2850bd" opacity=".5"/>
            <path d="M30 52Q175 46 250 11" fill="none" stroke="#2f5fc2"/>
        </svg>`
    }
}

class TaskBar extends HTMLElement {
    constructor(){
        super()
        this.attachShadow({mode: 'open'})
        this.shadowRoot.innerHTML = `
        <style>
        :host{
            display: flex;
            box-sizing: border-box;
            height: 40px;
            border-top: 1px solid #23425f;
            background: linear-gradient(90deg, #93a5bb, #a5b7d4 110px, #a9c1df 300px, #a9c1de calc(100% - 200px), #7a8ca4 calc(100% - 150px), #8195ab);
            box-shadow: inset 0 1px 0 #cbd9e9;
        }
        .tray{ display: flex; align-items: center; margin-left: auto; color: #fff; }
        .tray button{ padding: 0; border: 0; background: none; }
        .up{ width: 10px; height: 6px; margin-right: 11px; }
        .muted{ margin: 0 8px; }
        .clock{ width: 70px; text-align: center; line-height: 17px; }
        .clock time{ display: block; }
        .tray .show{ align-self: stretch; width: 14px; border-left: 1px solid #42566b; background: linear-gradient(#93a4b6, #6c7e92); box-shadow: inset 1px 1px 0 #c0cedb; }
        </style>
        <slot></slot>
        <div class="tray">
            <button aria-label="Show hidden icons"><win-icon class="up" name="up"></win-icon></button>
            <win-icon name="lan"></win-icon>
            <win-icon class="muted" name="muted"></win-icon>
            <div class="clock"><time>3:54 PM</time><time>1/5/2012</time></div>
            <button class="show" aria-label="Show desktop"></button>
        </div>`
    }
}

class TaskButton extends HTMLElement {
    constructor(){
        super()
        this.attachShadow({mode: 'open'})
        const size = this.getAttribute('size')
        const sheets = '<i></i>'.repeat(Number(this.getAttribute('stack')))
        this.shadowRoot.innerHTML = `
        <style>
        :host{ display: flex; width: 62px; }
        button{
            flex: 1;
            display: grid;
            place-items: center;
            padding: 0;
            border: 1px solid transparent;
            border-width: 0 1px;
            background: none;
        }
        win-icon{ width: ${size}px; height: ${size}px; }
        i{ width: 3px; border-right: 1px solid #5f7389; background: #c3d1e3; }
        :host([state]) button{ border-color: #4a5d73; background: #b5c7de; box-shadow: inset 0 0 0 1px rgba(255,255,255,.55); }
        :host([state=active]) button{ background: radial-gradient(#bccadc, #e3eaf3); }
        :host([label=Start]){ width: 58px; }
        :host([state=open]){ width: 56px; }
        </style>
        <button aria-label="${this.getAttribute('label')}"><win-icon name="${this.getAttribute('icon')}"></win-icon></button>${sheets}`
    }
}

customElements.define('win-icon', WinIcon)
customElements.define('desktop-icon', DesktopIcon)
customElements.define('aero-window', AeroWindow)
customElements.define('blank-pane', BlankPane)
customElements.define('address-bar', AddressBar)
customElements.define('search-box', SearchBox)
customElements.define('command-bar', CommandBar)
customElements.define('nav-group', NavGroup)
customElements.define('nav-item', NavItem)
customElements.define('library-item', LibraryItem)
customElements.define('explorer-body', ExplorerBody)
customElements.define('details-pane', DetailsPane)
customElements.define('task-button', TaskButton)
customElements.define('task-bar', TaskBar)
customElements.define('desktop-screen', DesktopScreen)
</script>
</body>
</html>
